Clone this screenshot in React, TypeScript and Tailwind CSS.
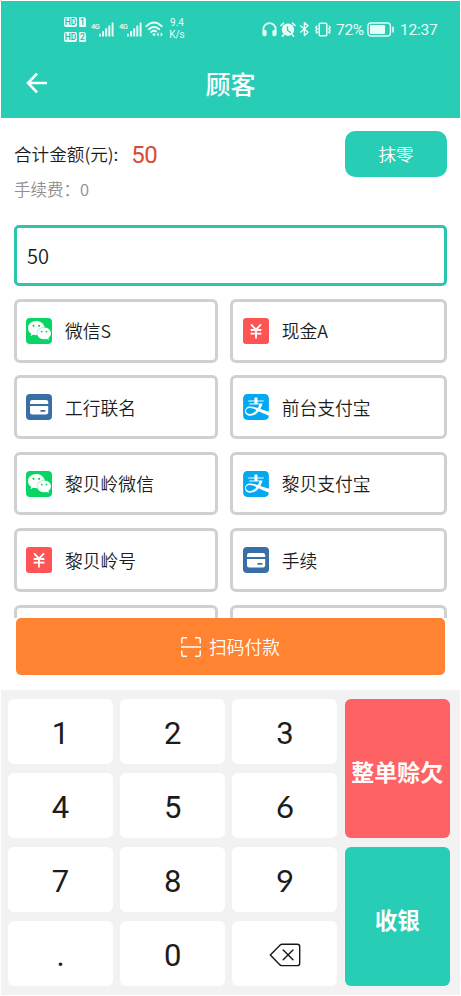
import React from 'react';
import { SiAlipay, SiWechat } from 'react-icons/si';

type PayKind = 'wechat' | 'cash' | 'card' | 'alipay';

const methods: { kind: PayKind; label: string }[] = [
  { kind: 'wechat', label: '微信S' },
  { kind: 'cash', label: '现金A' },
  { kind: 'card', label: '工行联名' },
  { kind: 'alipay', label: '前台支付宝' },
  { kind: 'wechat', label: '黎贝岭微信' },
  { kind: 'alipay', label: '黎贝支付宝' },
  { kind: 'cash', label: '黎贝岭号' },
  { kind: 'card', label: '手续' },
];

const keys = ['1', '2', '3', '4', '5', '6', '7', '8', '9', '.', '0', 'del'];

function HdBadge({ sim }: { sim: string }) {
  return (
    <div className="flex h-[10px] gap-[2px] font-['Roboto',sans-serif] text-[8.5px] leading-[10.5px] font-medium text-[#1fb9a2]">
      <span className="w-[13px] rounded-[2px] bg-[#e9fbf8] text-center">HD</span>
      <span className="w-[7px] rounded-[1px] rounded-tr-[3px] bg-[#e9fbf8] text-center">{sim}</span>
    </div>
  );
}

function Signal() {
  return (
    <div className="flex h-[15px] w-[23px] shrink-0 items-start">
      <span className="w-[8px] shrink-0 font-['Roboto',sans-serif] text-[7.5px] leading-[9px] font-medium tracking-[-0.6px]">4G</span>
      <svg className="h-[15px] w-[15px] shrink-0" viewBox="0 0 15 15" fill="currentColor">
        <rect x="0" y="11.8" width="2" height="2.7" rx=".6" />
        <rect x="3.1" y="9" width="2" height="5.5" rx=".6" />
        <rect x="6.2" y="6.2" width="2" height="8.3" rx=".6" />
        <rect x="9.3" y="3.4" width="2" height="11.1" rx=".6" />
        <rect x="12.6" y=".5" width="2" height="14" rx=".6" />
      </svg>
    </div>
  );
}

function StatusBar() {
  return (
    <div className="flex h-[56px] items-center pl-[63px] text-[#e9fbf8]">
      <div className="flex w-[22px] flex-col gap-[5px]">
        <HdBadge sim="1" />
        <HdBadge sim="2" />
      </div>
      <div className="ml-[5px] flex gap-[5px]">
        <Signal />
        <Signal />
      </div>
      <svg className="ml-[3px] h-[16px] w-[18px] shrink-0" viewBox="0 0 18 16" fill="none" stroke="currentColor" strokeWidth="1.9" strokeLinecap="round">
        <path d="M1.3 5.2Q9 -2 16.7 5.2M3.9 8.2Q9 3.8 14.1 8.2M6.2 11Q8.7 9 11 10.4" />
        <circle cx="9" cy="13.6" r="1.4" fill="currentColor" stroke="none" />
        <path d="M11.6 13.5l2.1-2.2v4.4zM17.8 13.5l-2.1-2.2v4.4z" fill="currentColor" stroke="none" />
      </svg>
      <div className="ml-[5px] w-[18px] text-center font-['Roboto',sans-serif] text-[10px] leading-[12px] font-normal">
        <div>9.4</div>
        <div>K/s</div>
      </div>
      <svg className="ml-[76px] h-[15px] w-[15px] shrink-0" viewBox="0 0 15 15" fill="none" stroke="currentColor" strokeWidth="1.8">
        <path d="M1.4 12V7.2a6.1 6.1 0 0 1 12.2 0V12" />
        <rect x=".6" y="8" width="4" height="6.2" rx="1.4" fill="currentColor" stroke="none" />
        <rect x="10.4" y="8" width="4" height="6.2" rx="1.4" fill="currentColor" stroke="none" />
      </svg>
      <svg className="ml-[3px] h-[15px] w-[16px] shrink-0" viewBox="0 0 16 15" fill="none" stroke="currentColor" strokeLinecap="round">
        <circle cx="8" cy="7.7" r="6.2" fill="currentColor" stroke="none" />
        <path d="M1 3.4L3.5 1.2M15 3.4L12.5 1.2M3.7 12.8L2.5 14.1M12.3 12.8L13.5 14.1" strokeWidth="1.6" />
        <path d="M7.5 4.8v3.5l2.9 2.3" stroke="#27ceb5" strokeWidth="1.3" />
      </svg>
      <svg className="ml-[3px] h-[16px] w-[11px] shrink-0" viewBox="0 0 11 16" fill="none" stroke="currentColor" strokeWidth="1.4" strokeLinejoin="round">
        <path d="M1.2 4.5L9 11.3L5.4 14.6V1.4L9 4.7L1.2 11.5" />
      </svg>
      <svg className="ml-[4px] h-[15px] w-[18px] shrink-0" viewBox="0 0 18 15" fill="none" stroke="currentColor" strokeWidth="1.6">
        <rect x="5.2" y="1.2" width="7.6" height="12.6" rx="1.4" />
        <path d="M3.2 3.8L1.8 5.4L3.2 7L1.8 8.6L3.2 10.2L1.8 11.5M14.8 3.8L16.2 5.4L14.8 7L16.2 8.6L14.8 10.2L16.2 11.5" strokeWidth="1.4" />
      </svg>
      <span className="ml-[4px] w-[30px] shrink-0 pt-px font-['Roboto',sans-serif] text-[15.5px] leading-[18px] tracking-[-0.3px]">72%</span>
      <svg className="ml-px h-[15px] w-[28px] shrink-0" viewBox="0 0 28 15" fill="none" stroke="currentColor" strokeWidth="1.4">
        <rect x="1" y="1" width="22.4" height="13" rx="3" />
        <rect x="3" y="3" width="15" height="9" rx="1" fill="currentColor" stroke="none" />
        <path d="M26 4.5v6" strokeWidth="1.6" />
      </svg>
      <span className="ml-[5px] pt-px font-['Roboto',sans-serif] text-[15.5px] leading-[18px] tracking-[-0.2px]">12:37</span>
    </div>
  );
}

function PayIcon({ kind }: { kind: PayKind }) {
  if (kind === 'wechat') {
    return (
      <span className="flex size-[26px] items-center justify-center rounded-[4px] bg-[#07d564] text-white">
        <SiWechat size={23} />
      </span>
    );
  }
  if (kind === 'alipay') {
    return <SiAlipay size={26} color="#02a9f1" />;
  }
  if (kind === 'cash') {
    return (
      <svg className="size-[26px]" viewBox="0 0 26 26" fill="none">
        <rect width="26" height="26" rx="3" fill="#fe5454" />
        <path d="M8 6.3L13 11.7L18 6.3M7.6 12H18.4M7.6 15.6H18.4M13 11.7V20.5" stroke="#fff" strokeWidth="1.8" />
      </svg>
    );
  }
  return (
    <svg className="size-[26px]" viewBox="0 0 26 26">
      <rect width="26" height="26" rx="4" fill="#386fa7" />
      <path d="M4 10V8.2Q4 6 6.2 6H20Q22.2 6 22.2 8.2V10z" fill="#fff" />
      <path d="M4 12H22.2V18.2Q22.2 20.4 20 20.4H6.2Q4 20.4 4 18.2z" fill="#fff" />
      <rect x="14.4" y="16" width="5" height="1.8" rx=".5" fill="#386fa7" />
    </svg>
  );
}

function Backspace() {
  return (
    <svg className="h-[24px] w-[32px]" viewBox="0 0 32 24" fill="none" stroke="#171717" strokeWidth="1.4" strokeLinejoin="round" strokeLinecap="round">
      <path d="M1.3 12L11.2 2.1Q12 1.3 13.3 1.3H28.4Q30.7 1.3 30.7 3.6V20.2Q30.7 22.6 28.4 22.6H13Q11.8 22.6 11 21.9z" />
      <path d="M14.2 7L24 16.8M24 7L14.2 16.8" />
    </svg>
  );
}

export default function App() {
  return (
    <div className="flex h-[996px] w-[461px] flex-col overflow-hidden bg-white p-px font-['Noto_Sans_CJK_SC',sans-serif] text-[#1c1c1c]">
      <header className="h-[117px] shrink-0 bg-[#27ceb5]">
        <StatusBar />
        <div className="grid h-[52px] grid-cols-[80px_1fr_80px] items-center">
          <svg className="ml-[25px] h-[22px] w-[22px]" viewBox="0 0 22 22" fill="none" stroke="#fff" strokeWidth="2.6">
            <path d="M11 1.7L2 11L11 20.3M2 11H21" />
          </svg>
          <h1 className="text-center text-[25px] leading-[36px] font-medium text-white">顾客</h1>
        </div>
      </header>

      <main className="h-[500px] shrink-0 overflow-hidden px-[13px] pt-[13px]">
        <div className="flex h-[94px] justify-between">
          <div>
            <div className="flex h-[46px] items-center">
              <span className="text-[17.6px] leading-[26px] font-[350]">合计金额(元):</span>
              <span className="ml-[13px] pt-[2px] font-['Roboto',sans-serif] text-[24px] leading-[28px] tracking-[-0.5px] text-[#d94a35]">50</span>
            </div>
            <div className="mt-px text-[16.5px] leading-[22px] font-[350] text-[#8f8f8f]">手续费：0</div>
          </div>
          <button className="h-[46px] w-[102px] rounded-[10px] bg-[#27ceb5] text-[17.5px] font-[350] text-white">抹零</button>
        </div>

        <div className="flex h-[61px] items-center rounded-[5px] border-3 border-[#2cc5ae] px-[10px] text-[20px] font-[350]">50</div>

        <div className="mt-[13px] grid grid-cols-[204px_217px] auto-rows-[63.5px] gap-x-[12px] gap-y-[12.9px]">
          {methods.map((m) => (
            <div key={m.label} className="flex items-center gap-[13px] rounded-[6px] border-3 border-[#d0d0d0] pl-[9px] text-[17.8px] font-[350] even:pl-[9.7px]">
              <PayIcon kind={m.kind} />
              <span>{m.label}</span>
            </div>
          ))}
          <div className="rounded-[6px] border-3 border-[#d0d0d0]" />
          <div className="rounded-[6px] border-3 border-[#d0d0d0]" />
        </div>
      </main>

      <div className="h-[72px] shrink-0 px-[15px]">
        <button className="flex h-[56.5px] w-full items-center justify-center gap-[8px] rounded-[5px] bg-[#ff8330] pt-px text-[17.7px] font-[350] text-white">
          <svg className="h-[20px] w-[20px]" viewBox="0 0 20 20" fill="none" stroke="currentColor" strokeWidth="1.5">
            <path d="M.8 6.5V2.3Q.8.8 2.3.8H6M14 .8H17.7Q19.2.8 19.2 2.3V6.5M19.2 13.5V17.7Q19.2 19.2 17.7 19.2H14M6 19.2H2.3Q.8 19.2.8 17.7V13.5M0 10H20" />
          </svg>
          <span>扫码付款</span>
        </button>
      </div>

      <div className="flex h-[305px] shrink-0 gap-[7px] bg-[#f2f2f2] px-[7px] pt-[9px]">
        <div className="grid w-[329.5px] grid-cols-3 auto-rows-[65px] gap-x-[7px] gap-y-[9px]">
          {keys.map((k) => (
            <button
              key={k}
              className={`flex items-center justify-center rounded-[6px] bg-white text-[31px] leading-none ${
                k === '6' || k === '9' ? "pt-px font-['Lato',sans-serif]" : "pt-[3px] font-['Roboto',sans-serif]"
              }`}
            >
              {k === 'del' ? <Backspace /> : k}
            </button>
          ))}
        </div>
        <div className="flex w-[105.5px] flex-col gap-[9px] font-bold text-white">
          <button className="h-[139px] rounded-[6px] bg-[#ff6264] pt-[6px] text-[23px]">整单赊欠</button>
          <button className="h-[139px] rounded-[6px] bg-[#27ceb5] pt-[6px] text-[22.5px]">收银</button>
        </div>
      </div>
    </div>
  );
}
